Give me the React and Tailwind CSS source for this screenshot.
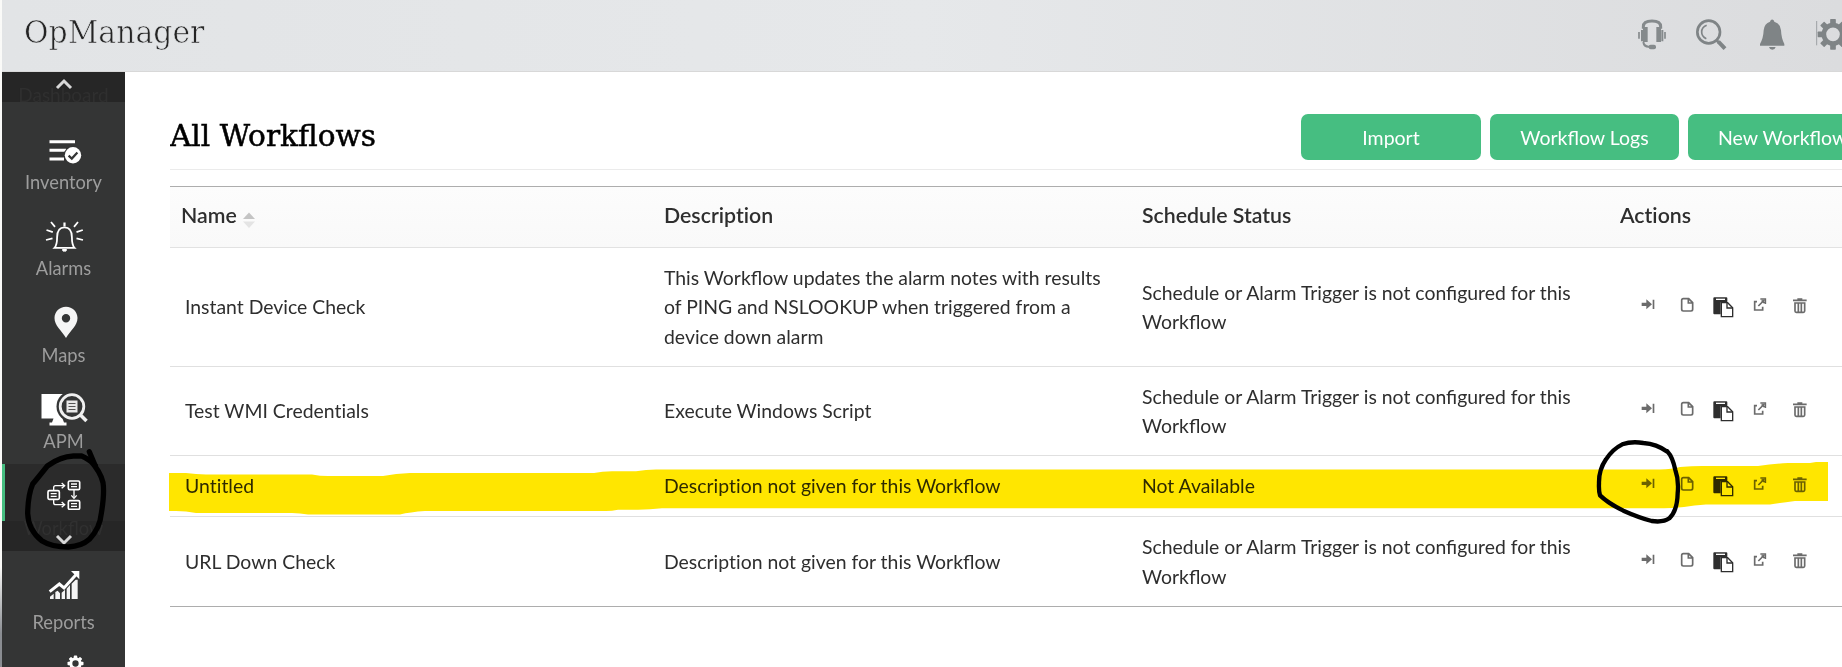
import React from "react";

/* Keeps the "fl" and "fi" ligatures but sets "ti"/"tt" pairs as separate letters */
const T = ({ children }) =>
  children.split(/(tt?i)/).map((part, i) =>
    i % 2 ? (
      <span key={i} className="[font-variant-ligatures:none]">{part}</span>
    ) : (
      part
    )
  );

const Label = ({ children }) => (
  <span className="h-6 text-[18.3px] leading-[25px] text-[#9d9d9d]">{children}</span>
);

const NavItem = ({ label, children }) => (
  <div className="flex h-[86.3px] flex-col items-center">
    <div className="flex h-[38px] items-center">{children}</div>
    <Label>{label}</Label>
  </div>
);

const InventoryIcon = () => (
  <svg width="46" height="38" viewBox="41 132 46 38">
    <path d="M49.5 141.7H75M49.5 150.3H66M49.5 159H64" stroke="#fff" strokeWidth="3" />
    <circle cx="73" cy="155.3" r="9.3" fill="#343535" />
    <circle cx="73" cy="155.3" r="8.2" fill="#fff" />
    <path d="M68.6 155.6l3.2 3 5.6-6.2" fill="none" stroke="#343535" strokeWidth="2.2" />
  </svg>
);

const AlarmsIcon = () => (
  <svg width="46" height="38" viewBox="41 218 46 38" fill="none" stroke="#fff" strokeWidth="1.8">
    <path d="M54.5 247.8c2-2 2.600-5 2.600-10.500 0-6.500 2.800-10 7.400-10s7.400 3.500 7.400 10c0 5.500.6 8.500 2.600 10.500z" />
    <path d="M64.500 222.500v4" strokeWidth="2.200" />
    <path d="M62.500 249.500h4l-.5 1.600h-3z" fill="#fff" strokeWidth="1" />
    <path d="M51 222l4 4.800M46.500 230l6.300 2.200M46 240l6.500-1.700M78 222l-4 4.800M82.800 230l-6.300 2.200M83 240l-6.500-1.700" />
  </svg>
);

const MapsIcon = () => (
  <svg width="46" height="38" viewBox="40.500 304 46 38">
    <path
      fillRule="evenodd"
      fill="#f5f5f5"
      d="M65.500 305.700c-6.600 0-11.500 5-11.500 11.300 0 7.500 7 12.500 11.500 20 4.500-7.500 11.500-12.500 11.500-20 0-6.300-4.900-11.300-11.500-11.300zm0 7.300a4.200 4.200 0 1 1 0 8.400 4.200 4.200 0 0 1 0-8.400z"
    />
  </svg>
);

const ApmIcon = () => (
  <svg width="50" height="38" viewBox="38.500 390 50 38">
    <path fill="#fff" d="M41 393h27v24.500h-6l1.500 4h2.500v3H49v-3h2.500l1.500-4H41z" />
    <circle cx="71.500" cy="405.500" r="15.500" fill="#343535" />
    <circle cx="71.500" cy="405.500" r="11.800" fill="none" stroke="#f0f0f0" strokeWidth="2.800" />
    <path d="M79.500 413.500l6.500 6.500" stroke="#f0f0f0" strokeWidth="3.600" />
    <rect x="66" y="399.500" width="11" height="12" fill="#e8e8e8" />
    <path d="M68 402.500h7M68 405.500h7M68 408.500h7" stroke="#555" strokeWidth="1" />
  </svg>
);

const WorkflowIcon = () => (
  <svg width="38" height="32" viewBox="137 84 114 96" fill="none" stroke="#fff" strokeWidth="5">
    <rect x="204" y="93" width="34" height="26" rx="4" />
    <rect x="143" y="122" width="34" height="26" rx="4" />
    <rect x="204" y="152" width="34" height="26" rx="4" />
    <path d="M212 102h18M212 110h18M151 131h18M151 139h18M212 161h18M212 169h18" strokeWidth="4" />
    <path d="M160 121v-8q0-6 6-6h25M160 149v9q0 6 6 6h25M221 119v24" strokeWidth="4" />
    <path d="M184 99l9 8-9 8M184 156l9 8-9 8M213 136l8 9 8-9" strokeWidth="4" />
  </svg>
);

const ReportsIcon = () => (
  <svg width="46" height="38" viewBox="122 354 138 114">
    <path
      fill="#f4f4f4"
      d="M149 447v-7l11-9v16zM165 447v-21l7-4 7 8v17zM184 447v-19l10-9v28zM199 447v-31l10-11v42zM214 447v-46l12-12h6v58z"
    />
    <path d="M148 425l29-23 14 12 38-42" fill="none" stroke="#fff" strokeWidth="9" />
    <path d="M212 363h25v25z" fill="#fff" />
  </svg>
);

const Chevron = ({ up }) => (
  <svg width="18" height="12" viewBox="0 0 18 12" fill="none" stroke="#d8d8d8" strokeWidth="3">
    <path d={up ? "M2 10l7-7 7 7" : "M2 2l7 7 7-7"} />
  </svg>
);

const Teeth = ({ cx, cy, r, w, n = 8, len }) =>
  Array.from({ length: n }, (_, i) => (
    <rect
      key={i}
      x={cx - w / 2}
      y={cy - r}
      width={w}
      height={len}
      rx="2"
      transform={`rotate(${(i * 360) / n} ${cx} ${cy})`}
    />
  ));

const HeaderIcons = () => (
  <>
    <svg className="shrink-0" width="32" height="35" viewBox="168 51 96 105" fill="none" stroke="#858a8c">
      <path d="M190 86V80q0-17 26-17t26 17v6" strokeWidth="9" />
      <path d="M196 81v45M236 81v45" strokeWidth="14" />
      <path d="M186 90v34M247 90v34" strokeWidth="6" />
      <path d="M177 96v20M255 96v20" strokeWidth="5" />
      <path d="M190 126q2 14 16 14h8" strokeWidth="6" />
      <rect x="206" y="134" width="22" height="14" rx="6" fill="#858a8c" stroke="none" />
    </svg>
    <svg className="ml-[27px] shrink-0" width="32" height="35" viewBox="345 51 96 105" fill="none" stroke="#7f8486">
      <circle cx="386" cy="96" r="34" strokeWidth="8" />
      <path d="M380 76q-15 6-15 20t14 20" strokeWidth="5" />
      <path d="M409 121l8 6" strokeWidth="8" />
      <path d="M415 125l20 21" strokeWidth="12" />
    </svg>
    <svg className="ml-[29px] shrink-0" width="32" height="35" viewBox="528 51 96 105" fill="#7f8486">
      <path d="M572 61q4-5 9 0l2 4q18 5 20 26 1 24 10 41v5h-73v-5q10-17 11-41 2-21 19-26z" />
      <path d="M567 141h20q-2 8-10 8t-10-8z" />
    </svg>
    <svg className="ml-[27px] shrink-0" width="32" height="35" viewBox="705 51 96 105" fill="#7f8486">
      <path d="M710 63v73" stroke="#7f8486" strokeWidth="2" />
      <Teeth cx={759} cy={103} r={46} w={17} len={18} />
      <circle cx="759" cy="103" r="27.500" fill="none" stroke="#7f8486" strokeWidth="14" />
    </svg>
  </>
);

const Actions = () => (
  <div className="flex items-center pl-5 text-[#6b6b6b]">
    <svg className="shrink-0" width="16" height="24" viewBox="240 75 48 72" fill="currentColor">
      <path d="M245 98h14v-10l17 15-17 15v-10h-14zM278 89h5v28h-5z" />
    </svg>
    <svg className="ml-[23px] shrink-0" width="16" height="24" viewBox="357 75 48 72" fill="none" stroke="currentColor" strokeWidth="5">
      <path d="M370 86h16l12 12v20q0 5-5 5h-23q-5 0-5-5V91q0-5 5-5zM385 86v13h13" />
    </svg>
    <svg className="ml-[17px] shrink-0" width="24" height="24" viewBox="456 75 72 72">
      <path d="M463 82h36q3 0 3 3v12h-20v36h-19q-3 0-3-3V85q0-3 3-3z" fill="#2e2e2e" />
      <path d="M468 88h27" className="stroke-white" strokeWidth="4" />
      <path d="M484 98h19l15 15v27h-34z" className="fill-white" stroke="#2e2e2e" strokeWidth="4" />
      <path d="M501 99v15h16" fill="none" stroke="#2e2e2e" strokeWidth="4" />
    </svg>
    <svg className="ml-[16px] shrink-0" width="16" height="24" viewBox="576 75 48 72" fill="none" stroke="currentColor" strokeWidth="5">
      <path d="M591 95h-7v25h24v-10M595 108l18-18" />
      <path d="M601 87h15v15M605 91l8 8" />
    </svg>
    <svg className="ml-[24px] shrink-0" width="16" height="24" viewBox="696 75 48 72" fill="none" stroke="currentColor" strokeWidth="5">
      <path d="M699 91h41M712 87h15M705 99h29v24q0 4-4 4h-21q-4 0-4-4zM715 99v27M724 99v27" />
    </svg>
  </div>
);

const rows = [
  {
    h: "h-[119px]",
    name: "Instant Device Check",
    desc: "This Workflow updates the alarm notes with results of PING and NSLOOKUP when triggered from a device down alarm",
    status: "Schedule or Alarm Trigger is not configured for this Workflow",
  },
  {
    h: "h-[89px]",
    name: "Test WMI Credentials",
    desc: "Execute Windows Script",
    status: "Schedule or Alarm Trigger is not configured for this Workflow",
  },
  {
    h: "h-[61px]",
    name: "Untitled",
    desc: "Description not given for this Workflow",
    status: "Not Available",
  },
  {
    h: "h-[89px]",
    name: "URL Down Check",
    desc: "Description not given for this Workflow",
    status: "Schedule or Alarm Trigger is not configured for this Workflow",
  },
];

const Button = ({ className, children }) => (
  <button
    className={`flex h-[46px] shrink-0 items-center rounded-[7px] bg-[#46be81] pt-0.5 text-[19.5px] text-white ${className}`}
  >
    {children}
  </button>
);

function Sidebar() {
  return (
    <nav className="flex w-[123px] shrink-0 flex-col bg-[#343535]">
      <div className="relative flex h-[30px] shrink-0 justify-center overflow-hidden bg-[#262626] pt-[6px]">
        <Chevron up />
        <span className="absolute top-[11px] text-[19px] leading-6 text-[#2f2f2f]">Dashboard</span>
      </div>
      <div className="h-[362px] shrink-0 pt-[30px]">
        <NavItem label="Inventory"><InventoryIcon /></NavItem>
        <NavItem label="Alarms"><AlarmsIcon /></NavItem>
        <NavItem label="Maps"><MapsIcon /></NavItem>
        <NavItem label="APM"><ApmIcon /></NavItem>
      </div>
      <div className="flex h-[57px] shrink-0 items-start justify-center border-l-[3px] border-[#46be81] bg-[#2b2b2b] pt-[14px]">
        <WorkflowIcon />
      </div>
      <div className="relative flex h-[30px] shrink-0 justify-center overflow-hidden bg-[#262626] pt-[13px]">
        <span className="absolute -top-[5px] text-[18.300px] leading-6 text-[#303030]">Workflow</span>
        <Chevron />
      </div>
      <div className="flex shrink-0 flex-col items-center pt-[17px]">
        <div className="h-[42px]"><ReportsIcon /></div>
        <Label>Reports</Label>
      </div>
      <div className="ml-[65px] mt-[21px] h-[12px] overflow-hidden">
        <svg width="17" height="17" viewBox="0 0 51 51" fill="#fff">
          <Teeth cx={25.5} cy={25.5} r={24} w={10} len={11} />
          <circle cx="25.5" cy="25.5" r="14" fill="none" stroke="#fff" strokeWidth="9" />
        </svg>
      </div>
    </nav>
  );
}

/* Marker strokes drawn over the page */
const Markup = () => (
  <svg className="pointer-events-none absolute left-0 top-0 mix-blend-multiply" width="1842" height="667" viewBox="0 0 1842 667">
    <path
      fill="#ffe600"
      d="M169 473H186Q196 474 206 474.500H312Q320 476 328 476H383Q396 473.500 410 473H594Q602 471.500 612 471.300H636Q646 469.600 656 469.500H1660Q1672 469 1680 467Q1692 466 1702 466H1758Q1774 463.700 1788 463H1810L1816 462H1828V501H1795Q1780 503 1770 504.500H1706Q1694 505 1684 507Q1674 508.300 1655 508.300H662Q650 509.700 638 509.700H618Q612 511 606 511H425Q410 512 400 514.500H308Q300 513 292 513H196Q186 511 176 511H169Z"
    />
    <g fill="none" stroke="#000" strokeLinecap="round" strokeLinejoin="round">
      <path
        transform="translate(1560 420) scale(.33333)"
        strokeWidth="13"
        d="M322 95Q290 72 250 69Q215 63 187 73Q158 87 138 118Q116 150 117 190Q116 215 120 226Q145 250 190 272Q235 292 275 303Q310 308 328 295Q352 272 353 220Q357 180 346 150Q337 110 324 97L322 94"
      />
      <path
        transform="translate(0 450) scale(.33333)"
        strokeWidth="16"
        d="M268 5L286 48M286 46Q265 26 245 18H220Q180 20 142 48Q110 88 98 102Q84 135 83 190Q85 240 125 272Q155 291 205 291Q245 289 268 268Q300 235 304 190Q314 130 309 98Q302 65 268 28"
      />
    </g>
  </svg>
);

export default function App() {
  return (
    <div className="relative flex h-[667px] w-[1842px] overflow-hidden bg-white font-['Lato',sans-serif] text-[#2e2e2e]">
      <div className="w-[2px] shrink-0 bg-gradient-to-b from-[#fafaf8] from-85% to-[#8a8d92] to-95%" />
      <div className="flex min-w-0 grow flex-col">
        <header className="flex h-[72px] shrink-0 items-start overflow-hidden border-b border-[#d8d8d8] bg-linear-to-r from-[#e2e4e6] via-[#e6e8ea] to-[#dbdcde]">
          <h1 className="w-[1634px] shrink-0 pl-[22px] pt-[9px]">
            <span className="inline-block origin-left scale-x-[0.935] font-['DejaVu_Serif',serif] text-[32px] leading-[46px] text-[#242424] [-webkit-text-stroke:0.7px_#e4e6e8]">
              OpManager
            </span>
          </h1>
          <div className="flex pt-[17px]">
            <HeaderIcons />
          </div>
        </header>
        <div className="flex grow">
          <Sidebar />
          <main className="ml-[45px] w-[1672px] overflow-hidden">
            <div className="flex h-[98px] items-start border-b border-[#ebebeb]">
              <h2 className="w-[1131px] shrink-0 pt-[44px]">
                <span className="inline-block origin-left scale-x-[1.02] font-['DejaVu_Serif',serif] text-[29px] leading-[40px] text-black [-webkit-text-stroke:0.5px_#000]">
                  All Workflows
                </span>
              </h2>
              <div className="flex gap-[9px] pt-[42px]">
                <Button className="w-[180px] justify-center">Import</Button>
                <Button className="w-[189px] justify-center">Workflow Logs</Button>
                <Button className="w-[189px] pl-[30px]">New Workflow</Button>
              </div>
            </div>
            <div className="mt-4 border-b border-t border-[#adadad]">
              <div className="grid h-[61px] grid-cols-[494px_478px_478px_1fr] items-center border-b border-[#e2e2e2] bg-linear-to-b from-[#fcfcfc] to-[#f9f9f9] pb-[3px] text-[21.3px] font-semibold">
                <div className="flex items-center gap-1.5 pl-[11px]">
                  Name
                  <svg className="mt-2" width="12" height="16" viewBox="0 0 12 16">
                    <path d="M0 7l6-6.500L12 7z" fill="#c4c4c4" />
                    <path d="M0 9.500h12L6 16z" fill="#e4e4e4" />
                  </svg>
                </div>
                <div><T>Description</T></div>
                <div><T>Schedule Status</T></div>
                <div><T>Actions</T></div>
              </div>
              {rows.map((r) => (
                <div
                  key={r.name}
                  className={`grid grid-cols-[494px_478px_478px_1fr] items-center border-b border-[#e0e0e0] text-[19.4px] leading-[29.3px] last:border-b-0 ${r.h}`}
                >
                  <div className="pl-[15px]"><T>{r.name}</T></div>
                  <div className="pr-[36px]"><T>{r.desc}</T></div>
                  <div className="pr-[36px]"><T>{r.status}</T></div>
                  <Actions />
                </div>
              ))}
            </div>
          </main>
        </div>
      </div>
      <Markup />
    </div>
  );
}
